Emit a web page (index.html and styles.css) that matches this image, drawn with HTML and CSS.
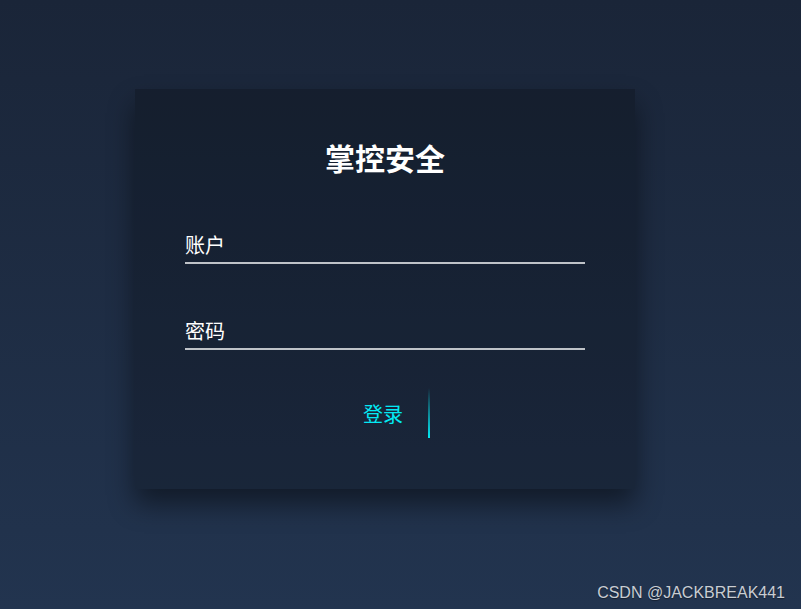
FILE: index.html
```html
<!DOCTYPE html>
<html lang="zh-CN">
<head>
  <meta charset="UTF-8">
  <meta name="viewport" content="width=device-width, initial-scale=1.0">
  <title>掌控安全</title>
  <link rel="stylesheet" href="styles.css">
</head>
<body>
  <div class="page">
    <div class="login-box">
      <h2>掌控安全</h2>
      <form>
        <div class="user-box">
          <label>账户</label>
        </div>
        <div class="user-box">
          <label>密码</label>
        </div>
        <div class="btn-row">
          <a class="login-btn" href="#">
            登录
            <span class="glow"></span>
          </a>
        </div>
      </form>
    </div>
  </div>
  <div class="watermark">CSDN @JACKBREAK441</div>
</body>
</html>
```

FILE: styles.css
```css
* {
  box-sizing: border-box;
  margin: 0;
  padding: 0;
}
html, body {
  height: 100%;
  overflow: hidden;
}
body {
  font-family: "Noto Sans CJK SC", "Liberation Sans", sans-serif;
  background: linear-gradient(to bottom, #1a2538, #22344f);
  color: #ffffff;
}
.page {
  padding: 89px 0 0 135px;
}
.login-box {
  width: 500px;
  height: 400px;
  padding: 48px 50px 50px;
  background: rgba(0, 0, 0, 0.22);
  box-shadow: 0 15px 25px rgba(0, 0, 0, 0.45);
}
.login-box h2 {
  font-size: 30px;
  line-height: 40px;
  font-weight: bold;
  text-align: center;
  color: #ffffff;
}
.user-box {
  height: 36px;
  border-bottom: 2px solid #bfc3c8;
  margin-top: 51px;
  display: flex;
  align-items: center;
}
.user-box + .user-box {
  margin-top: 50px;
}
.user-box label {
  font-size: 20px;
  line-height: 30px;
  color: #ffffff;
}
.btn-row {
  display: flex;
  justify-content: center;
  margin-top: 38px;
}
.login-btn {
  position: relative;
  display: block;
  width: 90px;
  height: 50px;
  line-height: 52px;
  text-align: center;
  font-size: 20px;
  color: #03e9f4;
  text-decoration: none;
  padding-right: 4px;
}
.login-btn .glow {
  position: absolute;
  right: 0;
  top: 0;
  width: 2px;
  height: 100%;
  background: linear-gradient(180deg, transparent, #03e9f4);
}
.watermark {
  position: absolute;
  right: 16px;
  bottom: 7px;
  font-family: "Liberation Sans", Arial, sans-serif;
  font-size: 16px;
  color: #c9cdd3;
  text-shadow: 0 1px 1px rgba(0, 0, 0, 0.4);
}
```
